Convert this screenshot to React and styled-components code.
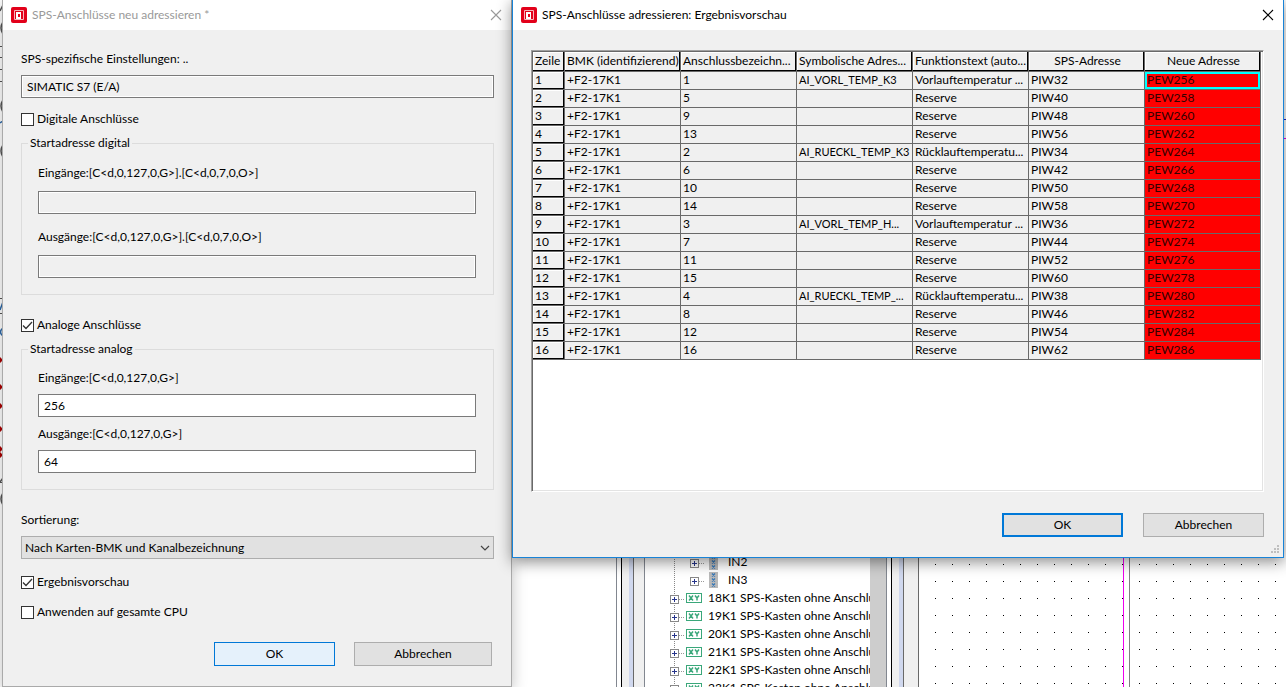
import React, { useState } from 'react'
import styled, { createGlobalStyle } from 'styled-components'

const GlobalStyle = createGlobalStyle`
  * { box-sizing: border-box; }
  body {
    margin: 0;
    overflow: hidden;
    background: #fff;
    color: #000;
    font: 12px/16px Lato, 'Open Sans', sans-serif;
  }
  button, input, select { font: inherit; color: inherit; margin: 0; }
`

/* ---------- editor behind the dialogs ---------- */

const Desktop = styled.main`
  position: relative;
  display: flex;
  height: 100vh;
  overflow: hidden;
`

const SchematicEdge = styled.div`
  flex: 0 0 616px;
  svg { display: block; }
`

const Splitter = styled.div`
  flex: 0 0 ${(p) => p.$width}px;
  display: flex;
  background: #f0f0f0;
  border-left: 1px solid #828790;
`

const Strip = styled.span`
  flex: 0 0 ${(p) => p.$width}px;
  background: ${(p) => p.$color};
`

const TreePanel = styled.nav`
  flex: 0 0 242px;
  min-width: 0;
  display: flex;
  align-items: flex-end;
  border-left: 1px solid #828790;
`

const Tree = styled.ul`
  flex: 1;
  min-width: 0;
  height: 134px;
  margin: 0;
  padding: 0 0 0 24px;
  overflow: hidden;
  list-style: none;
`

const TreeItem = styled.li`
  display: flex;
  align-items: center;
  height: 18px;
  padding-left: ${(p) => (p.$deep ? 20 : 0)}px;
  white-space: nowrap;
  background: repeating-linear-gradient(#888 0 1px, transparent 1px 2px) 5px 0 / 1px 100% no-repeat;
  svg { flex: none; }
  span { padding-left: ${(p) => (p.$deep ? 10 : 6)}px; }
`

const ScrollTrack = styled.div`
  flex: 0 0 16px;
  align-self: stretch;
  background: #cdcdcd;
`

const Sheet = styled.div`
  flex: 1;
  min-width: 0;
  background: #fff;
  svg { display: block; }
`

/* ---------- dialogs ---------- */

const Window = styled.section`
  position: absolute;
  top: -1px;
  left: ${(p) => p.$left}px;
  width: ${(p) => p.$width}px;
  background: #f0f0f0;
  border: 1px solid ${(p) => (p.$active ? '#1883d7' : '#aaa')};
  box-shadow: 0 4px 14px rgba(0, 0, 0, ${(p) => (p.$active ? 0.45 : 0.25)});
`

const TitleBar = styled.header`
  display: flex;
  align-items: center;
  gap: 5px;
  height: 30px;
  padding: 0 9px 0 8px;
  background: #fff;
  color: ${(p) => (p.$active ? '#000' : '#999')};
  h1 {
    flex: 1;
    margin: 0;
    font-size: 12px;
    font-weight: 400;
  }
`

const CloseButton = styled.button`
  display: flex;
  padding: 0;
  border: 0;
  background: none;
`

const Form = styled.form`
  display: flex;
  flex-direction: column;
  padding: 21px 17px 20px 18px;
`

const Label = styled.label`
  display: block;
  height: 16px;
`

const TextBox = styled.input`
  display: block;
  width: 100%;
  height: 23px;
  margin-top: ${(p) => p.$gap || 8}px;
  padding: 0 5px 1px;
  border: 1px solid #7a7a7a;
  border-radius: 0;
  outline: 0;
  background: ${(p) => (p.readOnly || p.disabled ? '#f0f0f0' : '#fff')};
  box-shadow: inset 0 0 0 1px #fff;
`

const CheckRow = styled.label`
  display: flex;
  align-items: center;
  gap: 3px;
  height: 16px;
  margin-top: ${(p) => p.$gap}px;
`

const CheckBox = styled.input`
  appearance: none;
  width: 13px;
  height: 13px;
  border: 1px solid #333;
  background: #fff;
  &:checked {
    background: #fff url("data:image/svg+xml,%3Csvg xmlns='http://www.w3.org/2000/svg' viewBox='0 0 11 11'%3E%3Cpath d='M1 5.5l3 3L10 2' fill='none' stroke='%23333' stroke-width='1.3'/%3E%3C/svg%3E");
  }
`

const Group = styled.fieldset`
  min-width: 0;
  margin: 8px 0 0;
  padding: ${(p) => (p.$tight ? 13 : 14)}px 17px 16px 16px;
  border: 1px solid #dcdcdc;
  legend {
    margin-left: -10px;
    padding: 0 2px;
  }
`

const Field = styled.div`
  margin-top: ${(p) => p.$gap || 0}px;
`

const SelectWrap = styled.div`
  display: grid;
  align-items: center;
  margin-top: 8px;
  > * { grid-area: 1 / 1; }
  svg { justify-self: end; margin-right: 4px; pointer-events: none; }
`

const Select = styled.select`
  appearance: none;
  width: 100%;
  height: 23px;
  padding: 0 3px;
  border: 1px solid #adadad;
  border-radius: 0;
  background: #e1e1e1;
`

const Actions = styled.footer`
  display: flex;
  justify-content: flex-end;
  gap: ${(p) => p.$gap}px;
  margin-top: ${(p) => p.$top || 22}px;
  padding-right: ${(p) => p.$inset || 0}px;
`

const Button = styled.button`
  width: ${(p) => p.$width || 121}px;
  height: 24px;
  padding: 0;
  border: ${(p) => (p.$focus ? '2px solid #0078d7' : p.$hot ? '1px solid #0078d7' : '1px solid #adadad')};
  background: ${(p) => (p.$hot ? '#e5f1fb' : '#e1e1e1')};
`

const PreviewBody = styled.div`
  padding: 20px 19px 3px 18px;
`

const GridFrame = styled.div`
  height: 442px;
  border: 1px solid;
  border-color: #a0a0a0 #fff #fff #a0a0a0;
  background: #fff;
  box-shadow: inset 1px 1px #696969, inset -1px -1px #e3e3e3;
  padding: 1px 0 0 1px;
`

const Table = styled.table`
  width: 728px;
  table-layout: fixed;
  border-collapse: separate;
  border-spacing: 0;
  background: #f0f0f0;
  th, td {
    height: 18px;
    padding: 0 0 1px 2px;
    overflow: hidden;
    font-weight: 400;
    line-height: 16px;
    text-align: left;
    white-space: nowrap;
    border-right: 1px solid #696969;
    border-bottom: 1px solid #696969;
  }
  th { box-shadow: inset -1px -1px #000, inset 1px 1px #fff; }
  thead th { height: 20px; }
  thead th.center { text-align: center; }
`

const Symbol = styled.td`
  font-size: 11px;
`

const NewAddress = styled.td`
  background: #f00;
  color: #300;
  ${(p) => p.$selected && 'box-shadow: inset 0 0 0 2px #0ff;'}
`

const Grip = styled.div`
  display: flex;
  justify-content: flex-end;
  height: 9px;
  margin: 8px -16px 0 0;
`

const Logo = () => (
  <svg width="16" height="16" viewBox="0 0 16 16" aria-hidden="true">
    <rect width="16" height="16" rx="2" fill="#e2001a" />
    <path d="M3.5 12.5v-9h9v9z" fill="none" stroke="#f7b5bb" />
    <path d="M5 5h5v7H5z" fill="#fff" />
    <path d="M7 7h2v3H7z" fill="#e2001a" />
  </svg>
)

const Cross = () => (
  <svg width="12" height="12" viewBox="0 0 12 12" aria-hidden="true">
    <path d="M1 1l10 10M11 1L1 11" stroke="currentColor" strokeWidth="1.1" />
  </svg>
)

const Chevron = () => (
  <svg width="10" height="6" viewBox="0 0 10 6" aria-hidden="true">
    <path d="M1 1l4 4 4-4" fill="none" stroke="#444" strokeWidth="1.2" />
  </svg>
)

const Expander = () => (
  <svg width="15" height="18" viewBox="0 0 15 18" aria-hidden="true">
    <path d="M10 10.5h5" stroke="#999" strokeDasharray="1 1" />
    <rect x="1.5" y="6.5" width="8" height="8" fill="#fff" stroke="#888" />
    <path d="M3 10.5h5M5.5 8v5" stroke="#26348b" />
  </svg>
)

const BoxIcon = () => (
  <svg width="18" height="18" viewBox="0 0 18 18" aria-hidden="true">
    <rect x="2.5" y="4.5" width="15" height="9" fill="#fff" stroke="#3aa77a" />
    <path d="M5 6.5l4 5M9 6.5l-4 5M11 6.5l2 2.5v2.5M15 6.5L13 9" fill="none" stroke="#3aa77a" strokeWidth="1.5" />
  </svg>
)

const TerminalIcon = () => (
  <svg width="14" height="18" viewBox="0 0 14 18" aria-hidden="true">
    <path d="M5 1h9v16H5z" fill="#b9b9b9" />
    <path d="M8 2.5l3 3M11 2.5l-3 3M8 7.5l3 3M11 7.5l-3 3M8 12.5l3 3M11 12.5l-3 3" stroke="#3477b8" strokeWidth="1.2" />
  </svg>
)

const GripIcon = () => (
  <svg width="9" height="9" viewBox="0 0 9 9" fill="#bfbfbf" aria-hidden="true">
    <path d="M6 0h2v2H6zM3 3h2v2H3zM6 3h2v2H6zM0 6h2v2H0zM3 6h2v2H3zM6 6h2v2H6z" />
  </svg>
)

const tree = ['18K1', '19K1', '20K1', '21K1', '22K1', '23K1']

const columns = [
  ['Zeile', 32],
  ['BMK (identifizierend)', 116],
  ['Anschlussbezeichn...', 116],
  ['Symbolische Adres...', 116],
  ['Funktionstext (auto...', 116],
  ['SPS-Adresse', 116],
  ['Neue Adresse', 116],
]

const rows = [
  ['1', 'AI_VORL_TEMP_K3', 'Vorlauftemperatur ...', 'PIW32'],
  ['5', '', 'Reserve', 'PIW40'],
  ['9', '', 'Reserve', 'PIW48'],
  ['13', '', 'Reserve', 'PIW56'],
  ['2', 'AI_RUECKL_TEMP_K3', 'Rücklauftemperatu...', 'PIW34'],
  ['6', '', 'Reserve', 'PIW42'],
  ['10', '', 'Reserve', 'PIW50'],
  ['14', '', 'Reserve', 'PIW58'],
  ['3', 'AI_VORL_TEMP_H...', 'Vorlauftemperatur ...', 'PIW36'],
  ['7', '', 'Reserve', 'PIW44'],
  ['11', '', 'Reserve', 'PIW52'],
  ['15', '', 'Reserve', 'PIW60'],
  ['4', 'AI_RUECKL_TEMP_...', 'Rücklauftemperatu...', 'PIW38'],
  ['8', '', 'Reserve', 'PIW46'],
  ['12', '', 'Reserve', 'PIW54'],
  ['16', '', 'Reserve', 'PIW62'],
]

const Dock = ({ width, children }) => (
  <Splitter $width={width}>
    <Strip $width={4} $color="#fff" />
    <Strip $width={1} $color="#000" />
    <Strip $width={7} $color="#f0f0f0" />
    <Strip $width={4} $color="#d0d8ee" />
    <Strip $width={1} $color="#696969" />
    {children}
  </Splitter>
)

const Editor = () => (
  <>
    <SchematicEdge>
      <svg width="616" height="687" aria-hidden="true">
        <path d="M0 46.5h3M0 57.5h3M0 69.5h3M0 81.5h3M0 298.5h3M0 313.5h3M0 482.5h3" stroke="#555" />
        <path d="M0 11l3-6M3 22q-4 6 0 12M3 100q-4 6 0 12M3 145q-4 6 0 12M3 493q-4 6 0 12M0 482l3-4" fill="none" stroke="#555" strokeWidth="1.5" />
        <path d="M0 310l3-8M3 328q-5 4 0 8M0 123l3-2" fill="none" stroke="#2c68a8" strokeWidth="1.5" />
        <path d="M0 357l3 3-3 3zM0 384l3 3-3 3zM0 403l3 3-3 3zM0 426l3 3-3 3zM0 446l3 3-3 3zM0 452l3 3-3 3z" fill="#a00" />
      </svg>
    </SchematicEdge>
    <Dock width={28} />
    <TreePanel aria-label="SPS">
      <Tree>
        {['IN2', 'IN3'].map((name) => (
          <TreeItem key={name} $deep>
            <Expander /><TerminalIcon /><span>{name}</span>
          </TreeItem>
        ))}
        {tree.map((name) => (
          <TreeItem key={name}>
            <Expander /><BoxIcon /><span>{name} SPS-Kasten ohne Anschlu</span>
          </TreeItem>
        ))}
      </Tree>
      <ScrollTrack />
    </TreePanel>
    <Dock width={33}>
      <Strip $width={14} $color="#f0f0f0" />
      <Strip $width={1} $color="#696969" />
    </Dock>
    <Sheet>
      <svg width="100%" height="100%" aria-hidden="true">
        <defs>
          <pattern id="raster" x="16" y="564" width="17" height="17" patternUnits="userSpaceOnUse">
            <rect width="1" height="1" />
          </pattern>
        </defs>
        <path d="M204.5 540v200" stroke="#e0e" />
        <path d="M210.5 540v200" stroke="#808080" />
        <rect width="100%" height="100%" fill="url(#raster)" />
        <path d="M364 119.5h4" stroke="#22c" />
        <path d="M364 138.5h4" stroke="#e0e" />
      </svg>
    </Sheet>
  </>
)

const AddressDialog = () => {
  const [digital, setDigital] = useState(false)
  const [analog, setAnalog] = useState(true)
  const [preview, setPreview] = useState(true)
  const [wholeCpu, setWholeCpu] = useState(false)

  return (
    <Window $left={2} $width={510} aria-labelledby="address-title">
      <TitleBar>
        <Logo />
        <h1 id="address-title">SPS-Anschlüsse neu adressieren *</h1>
        <CloseButton aria-label="Schließen"><Cross /></CloseButton>
      </TitleBar>
      <Form onSubmit={(e) => e.preventDefault()}>
        <Label htmlFor="settings">SPS-spezifische Einstellungen: ..</Label>
        <TextBox id="settings" readOnly value="SIMATIC S7 (E/A)" />

        <CheckRow $gap={13}>
          <CheckBox type="checkbox" checked={digital} onChange={() => setDigital(!digital)} />
          Digitale Anschlüsse
        </CheckRow>
        <Group>
          <legend>Startadresse digital</legend>
          <Field>
            <Label htmlFor="digital-in">Eingänge:[C&lt;d,0,127,0,G&gt;].[C&lt;d,0,7,0,O&gt;]</Label>
            <TextBox id="digital-in" $gap={10} disabled />
          </Field>
          <Field $gap={15}>
            <Label htmlFor="digital-out">Ausgänge:[C&lt;d,0,127,0,G&gt;].[C&lt;d,0,7,0,O&gt;]</Label>
            <TextBox id="digital-out" $gap={10} disabled />
          </Field>
        </Group>

        <CheckRow $gap={22}>
          <CheckBox type="checkbox" checked={analog} onChange={() => setAnalog(!analog)} />
          Analoge Anschlüsse
        </CheckRow>
        <Group $tight>
          <legend>Startadresse analog</legend>
          <Field>
            <Label htmlFor="analog-in">Eingänge:[C&lt;d,0,127,0,G&gt;]</Label>
            <TextBox id="analog-in" defaultValue="256" />
          </Field>
          <Field $gap={9}>
            <Label htmlFor="analog-out">Ausgänge:[C&lt;d,0,127,0,G&gt;]</Label>
            <TextBox id="analog-out" defaultValue="64" />
          </Field>
        </Group>

        <Field $gap={22}>
          <Label htmlFor="sort">Sortierung:</Label>
          <SelectWrap>
            <Select id="sort">
              <option>Nach Karten-BMK und Kanalbezeichnung</option>
            </Select>
            <Chevron />
          </SelectWrap>
        </Field>
        <CheckRow $gap={15}>
          <CheckBox type="checkbox" checked={preview} onChange={() => setPreview(!preview)} />
          Ergebnisvorschau
        </CheckRow>
        <CheckRow $gap={14}>
          <CheckBox type="checkbox" checked={wholeCpu} onChange={() => setWholeCpu(!wholeCpu)} />
          Anwenden auf gesamte CPU
        </CheckRow>
        <Actions $gap={19} $inset={2}>
          <Button $hot type="submit">OK</Button>
          <Button $width={138} type="button">Abbrechen</Button>
        </Actions>
      </Form>
    </Window>
  )
}

const PreviewDialog = () => (
  <Window $active $left={512} $width={772} aria-labelledby="preview-title">
    <TitleBar $active>
      <Logo />
      <h1 id="preview-title">SPS-Anschlüsse adressieren: Ergebnisvorschau</h1>
      <CloseButton aria-label="Schließen"><Cross /></CloseButton>
    </TitleBar>
    <PreviewBody>
      <GridFrame>
        <Table>
          <colgroup>
            {columns.map(([name, width]) => <col key={name} width={width} />)}
          </colgroup>
          <thead>
            <tr>
              {columns.map(([name], i) => (
                <th key={name} scope="col" className={i > 4 ? 'center' : undefined}>{name}</th>
              ))}
            </tr>
          </thead>
          <tbody>
            {rows.map(([pin, symbol, text, address], i) => (
              <tr key={address}>
                <th scope="row">{i + 1}</th>
                <td>+F2-17K1</td>
                <td>{pin}</td>
                <Symbol>{symbol}</Symbol>
                <td>{text}</td>
                <td>{address}</td>
                <NewAddress $selected={i === 0}>PEW{256 + i * 2}</NewAddress>
              </tr>
            ))}
          </tbody>
        </Table>
      </GridFrame>
      <Actions $gap={20} $top={21}>
        <Button $focus type="button">OK</Button>
        <Button type="button">Abbrechen</Button>
      </Actions>
      <Grip><GripIcon /></Grip>
    </PreviewBody>
  </Window>
)

export default function App() {
  return (
    <Desktop>
      <GlobalStyle />
      <Editor />
      <AddressDialog />
      <PreviewDialog />
    </Desktop>
  )
}
